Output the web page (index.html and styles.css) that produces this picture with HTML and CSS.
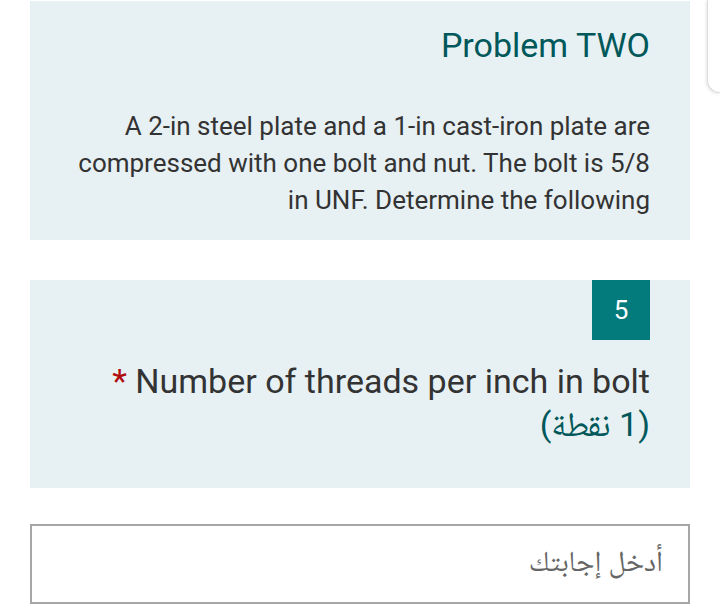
FILE: index.html
```
<!DOCTYPE html>
<html lang="en">
<head>
<meta charset="utf-8">
<link rel="stylesheet" href="styles.css">
</head>
<body>
<div class="page">
  <section class="card intro">
    <h1 class="title">Problem TWO</h1>
    <p class="desc">A 2-in steel plate and a 1-in cast-iron plate are compressed with one bolt and nut. The bolt is 5/8 in UNF. Determine the following</p>
  </section>
  <section class="card question">
    <div class="badge-row"><span class="badge">5</span></div>
    <div class="qtext"><span class="req">*</span> Number of threads per inch in bolt</div>
    <div class="points" dir="rtl">(1 نقطة)</div>
  </section>
  <div class="answer" dir="rtl"><span class="placeholder">أدخل إجابتك</span></div>
</div>
<div class="corner-popup"></div>
</body>
</html>
```
FILE: styles.css
```
html, body {
  margin: 0;
  padding: 0;
  background: #ffffff;
}
body {
  font-family: Roboto, "Noto Naskh Arabic", "Noto Sans Arabic", "DejaVu Sans", sans-serif;
  width: 720px;
  height: 614px;
  overflow: hidden;
  position: relative;
}
.page {
  padding: 1px 30px 0 30px;
  display: flex;
  flex-direction: column;
}
.card {
  background: #e7f0f3;
  padding: 0 40px;
  text-align: right;
}
.intro {
  padding-top: 24px;
  padding-bottom: 21px;
}
.title {
  margin: 0;
  font-weight: 400;
  font-size: 34px;
  line-height: 40px;
  color: #00585a;
}
.desc {
  margin: 43px 0 0 0;
  font-size: 26px;
  line-height: 37px;
  color: #333333;
}
.question {
  margin-top: 40px;
  padding-bottom: 42px;
}
.badge-row {
  display: flex;
  justify-content: flex-end;
}
.badge {
  width: 58px;
  height: 60px;
  background: #037a7b;
  color: #ffffff;
  font-size: 26px;
  display: flex;
  align-items: center;
  justify-content: center;
}
.qtext {
  margin-top: 20px;
  font-size: 34px;
  line-height: 43px;
  color: #333333;
}
.req {
  color: #b10d0d;
}
.points {
  font-size: 34px;
  line-height: 43px;
  color: #00585a;
  text-align: right;
}
.answer {
  margin-top: 36px;
  height: 76px;
  border: 2px solid #a6a6a6;
  display: flex;
  align-items: center;
  padding: 0 25px;
  box-sizing: content-box;
}
.placeholder {
  font-size: 29px;
  color: #666666;
}
.corner-popup {
  position: absolute;
  left: 707px;
  right: 0;
  top: 0;
  height: 92px;
  background: #ffffff;
  border-left: 1px solid #dcdcdc;
  border-bottom: 1px solid #dcdcdc;
  border-bottom-left-radius: 16px;
  box-shadow: -1px 1px 3px rgba(0,0,0,0.10);
}
```
